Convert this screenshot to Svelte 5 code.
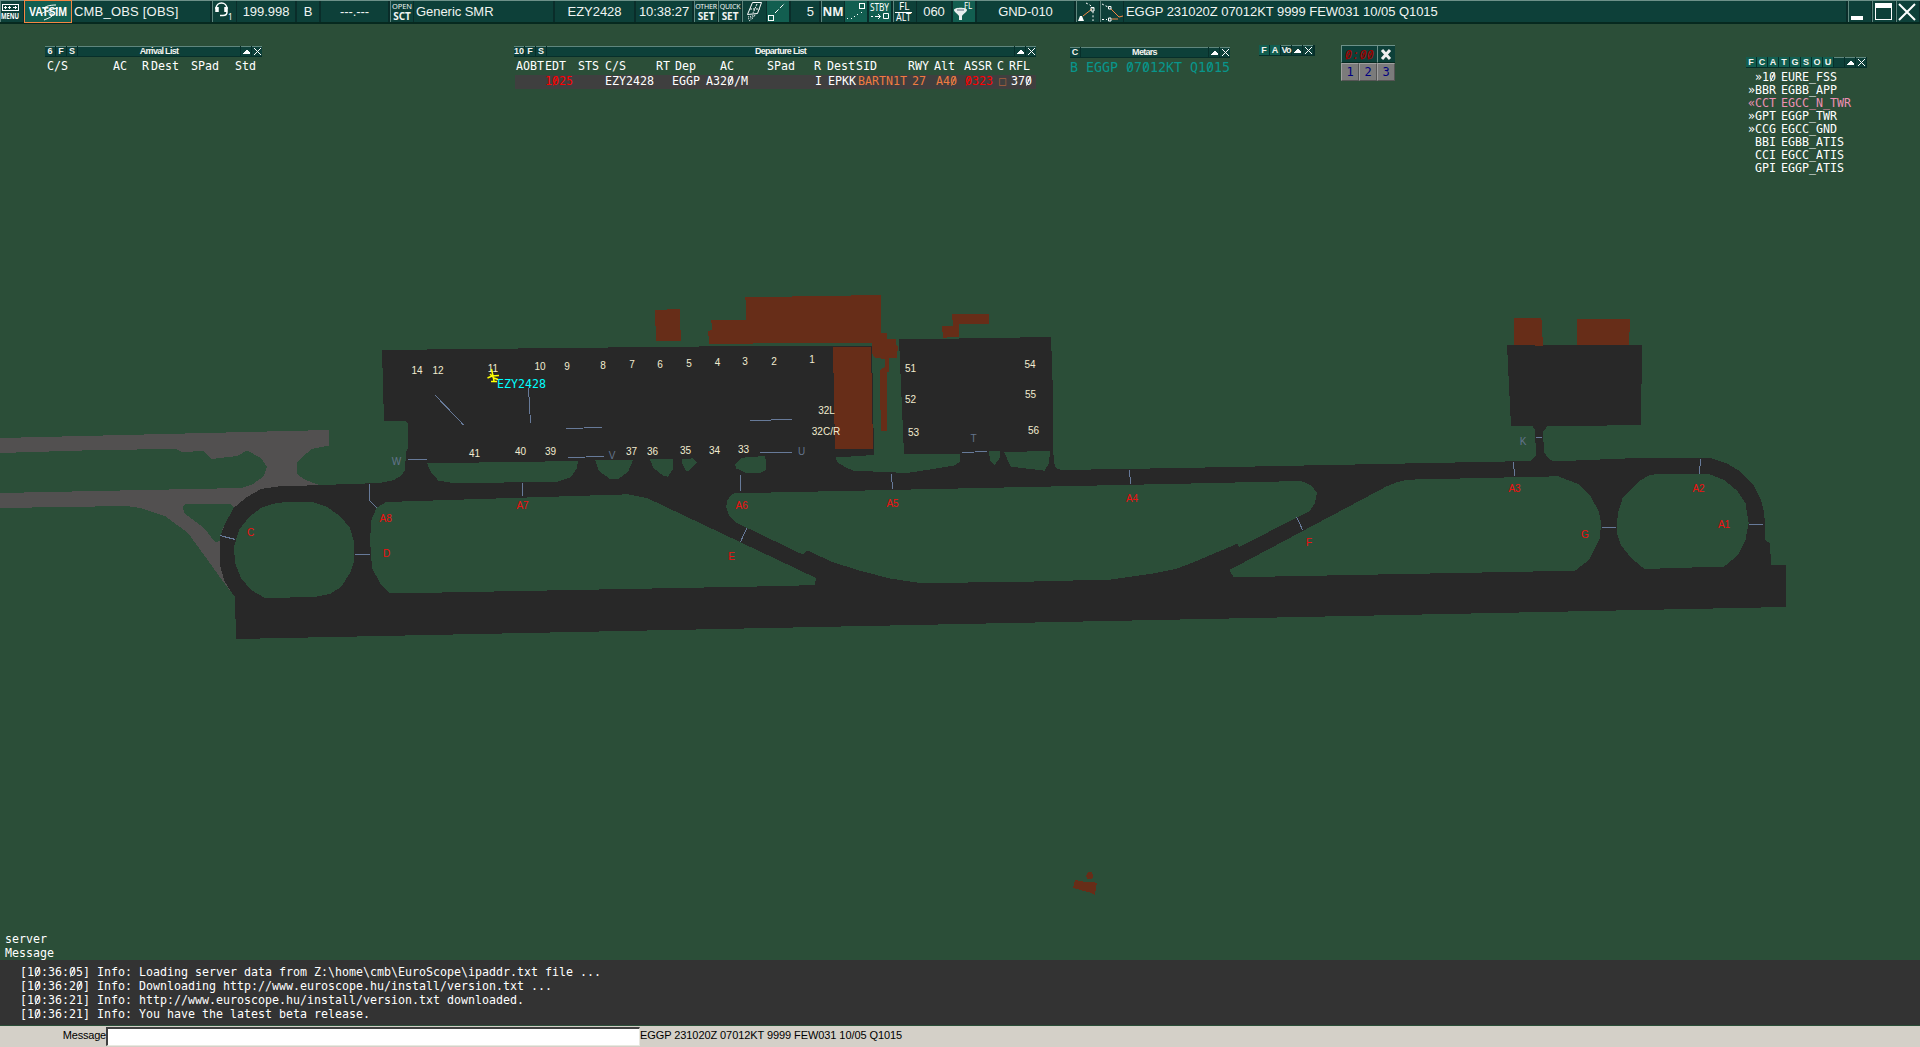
<script>
  const fills = {
    grey: [
      'M0 438L329 430V445.5L312 449L302 457L297 463V474L304 479L313 483L322 486L300 510L235 597L222 580L204 555L188 533L165 516L140 508L126 506L0 508Z'
    ],
    greyHoles: [
      'M0 453L98 450L176 449L182 452L203 451L212 459L237 456L247 450.5L261 458L267 467L264 476L253 484L241 488L0 493Z',
      'M185 504H230L235 508L222 530L220 541L215 542L204 528L184 513L183 506Z'
    ],
    dark: [
      'M235 597L236 639L1786 607V565H1771.5L1769.5 543L1765 540L1764.4 513L1761 500L1753 484L1739.5 471L1726 463L1710 458H1637L1571 460.7H1552L1548 458L1544 452L1543 432L1547 426.5L1594 425.7L1641 425L1642 345H1507L1511 426H1532.5L1535 430L1536 456L1530 461L1180 468L1061 470L1056 468L1053.6 462L1052.5 380L1051 337L899 339.5L904 454H960V462L954 465.5L933 469L904 473.5L892 472L854 471L845 467L837 462L836 457.5L874 455L872 345.5H790L382 350L384 421H405.5L407.5 423L408 448L406 452L405 470L402 475L394 480L380 483L278 486.5L261 489L247 497L233.5 508L224.5 525L220 537L219.5 563L224 580L228.5 588Z'
    ],
    grass: [
      'M286 502H312L326.5 506.5L341 517L350 528L353.5 540L354.5 560L350 573L341 587L330 594L314 597L265 598L251 590L241 578L235 563L234 547L239 530L249 517L261 508L273.5 503.7Z',
      'M386 502L628 494.3L647 498L740 542L816 578L815 585L783 586L389.5 593.5L380 583L372 568L370 540L371.4 520L376.5 508Z',
      'M734.6 493.3L1200 483.3L1301 481L1310.5 485L1317 492.5L1315 503L1309.5 511L1239.3 547L1237.3 543.7L1194 562L1176 569L1150 574L1111 579.5L1015 582L920 583L890 578.5L861 571L833 562.3L807 550.3L803 554.7L736.4 522.7L729.3 516L726 507L727.5 500L731 495Z',
      'M1407 479.7L1558 476.3L1579.5 484.5L1591 497L1599 512L1601 523L1600 538L1589 560L1575 570.7L1233.5 577.3L1229.5 570L1386 486.7L1397.5 482Z',
      'M1656.5 474H1709L1724 480L1737.5 491L1745.5 503L1748.6 523L1745.5 540L1738 555L1724 566.7L1698 567.3L1644.6 569L1631 558L1621 545L1617 533L1617.7 513L1623 497L1641 480L1648.6 475.7Z',
      'M427 463.3L578 461L577 468L571 477L556 482L453 483L438.5 480.7L431.5 473Z',
      'M595 460H633L628 472L618 479H610L599 471Z',
      'M649.6 459H673L672.5 470L668 476.7L663.6 476L653.6 468Z',
      'M682.5 459.3L693 458.3L697 462.7L689.3 470.7H685.7L682 463.3Z',
      'M742 457.7L765.4 456L766 470L760 473.3L745.7 472.7L736 468.3L735 464.3Z',
      'M989 451.3H1000L999.6 458.3L994.6 464.7L990 460Z',
      'M1004 451.7L1050 451.3L1049 463.3L1044.6 470.7L1010.7 466.7Z'
    ],
    brown: [
      'M833 347H871L873 448.7H835Z',
      'M745.4 297.3L881 295V333.3H887V339.3H896.5L895.7 344L898 346L896.8 358H889V371.7H886.8L887.5 431H881L879.6 370L884.6 367.3V359L875 357.7L872 353.3V343L709.3 343.7L708 331L711.8 330L711.4 320H746.4Z',
      'M654.6 310L679.6 309L681 340.7H656.4Z',
      'M952 314H989V324H959V337L943 337.7L942 326H953Z',
      'M1514 318H1541.4L1543 345.7L1514.5 345Z',
      'M1577 319H1630L1629 344.7H1577Z',
      'M1086 876L1088 872.5L1091.5 872L1093.5 875L1092 879L1088 879.5Z',
      'M1075 879.7L1087 882.5L1089.5 881.5L1097 883L1094.7 894.7L1091.5 893L1073 888Z'
    ]
  };

  const holdLines = [
    'M407.5 459.5H426.5', 'M369.5 484V500.7L376.7 508', 'M219.6 535.5L235.5 539.5',
    'M355 554.5H370', 'M522.5 482.5V496', 'M435 395L463.6 425', 'M528.5 388L530.5 423',
    'M566 428.5L602 427.5', 'M568 457.5L603.6 456.5', 'M750 420.5L792.5 419.5',
    'M760 452.5H792', 'M740.5 475V491', 'M891.5 474L892.5 489', 'M1129.5 470L1130.5 484',
    'M746.8 528L740.4 542', 'M962 452.5L987.5 451.5', 'M1536 437.5H1542',
    'M1513.5 462L1514.5 476', 'M1700.5 459L1699.5 474', 'M1601.5 527.5H1616',
    'M1749 524.5H1763', 'M1296.6 516.7L1302.6 530'
  ];

  const stands = [
    ['14', 417, 374], ['12', 438, 374], ['11', 493, 372], ['10', 540, 370], ['9', 567, 370],
    ['8', 603, 369], ['7', 632, 368], ['6', 660, 368], ['5', 689, 367], ['4', 717.5, 366],
    ['3', 745, 365], ['2', 774, 365], ['1', 812, 363], ['32L', 826.5, 414], ['32C/R', 826, 435],
    ['41', 474.5, 457], ['40', 520.5, 455], ['39', 550.5, 455], ['37', 631.5, 455],
    ['36', 652.5, 455], ['35', 685.5, 454], ['34', 714.5, 454], ['33', 743.5, 453],
    ['51', 910.5, 372], ['52', 910.5, 403], ['53', 913.5, 436], ['54', 1030, 368],
    ['55', 1030.5, 398], ['56', 1033.5, 434]
  ];
  const points = [
    ['C', 250.5, 536], ['A8', 385.7, 522], ['D', 386.5, 557], ['A7', 522.5, 509],
    ['A6', 741.7, 509], ['A5', 892.5, 507], ['A4', 1132, 502], ['E', 731.7, 560],
    ['A3', 1514.5, 492], ['A2', 1698.5, 492], ['A1', 1724, 528], ['F', 1309, 546], ['G', 1585, 538]
  ];
  const taxiways = [['W', 396.5, 465], ['V', 612, 459], ['U', 801.5, 455], ['T', 973.5, 442], ['K', 1523, 445]];

  // each cell: [width, text, colour class]
  const arrivalHead = [[66, 'C/S'], [29, 'AC'], [9, 'R'], [40, 'Dest'], [44, 'SPad'], [29, 'Std']];
  const departureHead = [
    [29, 'AOBT'], [33, 'EDT'], [27, 'STS'], [51, 'C/S'], [19, 'RT'], [45, 'Dep'], [47, 'AC'],
    [47, 'SPad'], [13, 'R'], [29, 'Dest'], [52, 'SID'], [26, 'RWY'], [30, 'Alt'], [33, 'ASSR'],
    [12, 'C'], [24, 'RFL']
  ];
  const departureRow = [
    [29, ''], [60, '1025', 'red'], [67, 'EZY2428'], [34, 'EGGP'], [109, 'A320/M'], [13, 'I'],
    [30, 'EPKK'], [54, 'BARTN1T', 'orange'], [24, '27', 'orange'], [29, 'A40', 'orange'],
    [34, '0323', 'red'], [12, '□', 'rust'], [24, '370']
  ];
  const controllers = [
    ['»10', 'EURE_FSS'], ['»BBR', 'EGBB_APP'], ['«CCT', 'EGCC_N_TWR', 'pink'], ['»GPT', 'EGGP_TWR'],
    ['»CCG', 'EGCC_GND'], ['BBI', 'EGBB_ATIS'], ['CCI', 'EGCC_ATIS'], ['GPI', 'EGGP_ATIS']
  ];
  const log = [
    '[10:36:05] Info: Loading server data from Z:\\home\\cmb\\EuroScope\\ipaddr.txt file ...',
    '[10:36:20] Info: Downloading http://www.euroscope.hu/install/version.txt ...',
    '[10:36:21] Info: http://www.euroscope.hu/install/version.txt downloaded.',
    '[10:36:21] Info: You have the latest beta release.'
  ];
  const metar = 'EGGP 231020Z 07012KT 9999 FEW031 10/05 Q1015';
  const pieces = (s) => s.split(/(0)/).filter((p) => p !== '');
</script>

{#snippet mono(s)}{#each pieces(s) as p}{#if p === '0'}<span class="zero">0</span>{:else}{p}{/if}{/each}{/snippet}

{#snippet cells(list)}
  {#each list as [w, text, tone]}<span class="cell {tone ?? ''}" style:width="{w}px">{@render mono(text)}</span>{/each}
{/snippet}

{#snippet upClose()}
  <span class="wb sq"><svg width="9" height="9" shape-rendering="crispEdges"><path d="M1 7H8V6L5 3H4L1 6Z" fill="#fff" /></svg></span>
  <span class="wb sq"><svg width="9" height="9"><path d="M1 1L8 8M8 1L1 8" stroke="#fff" /></svg></span>
{/snippet}

<div class="screen">
  <header class="bar">
    <div class="c btn w24">
      <svg width="22" height="21" shape-rendering="crispEdges" fill="none" stroke="#fff">
        <path d="M1.5 3.5H17.500V9.5H1.5ZM3 6.500H6M7 6.500H10M12 6.500H16M4.500 5V8M8.5 5V8M14.5 5V8" />
        <text x="0" y="18" class="tiny bold" textLength="18" lengthAdjust="spacingAndGlyphs">MENU</text>
      </svg>
    </div>
    <div class="logo">
      <svg width="46" height="21">
        <text x="4" y="15" textLength="38" lengthAdjust="spacingAndGlyphs" class="vat">VATSIM</text>
        <path d="M31 4C24 4 17 6 20 9C23 12 31 12 27 15C25 17 21 18 19 19M16 13C22 9 28 8 33 7" fill="none" stroke="#fff" />
      </svg>
    </div>
    <div class="c left w140 wide">CMB_OBS [OBS]</div>
    <div class="c btn w25">
      <svg width="23" height="21" fill="none" stroke="#fff">
        <path d="M3 8C3 0 14 0 14 8" stroke-width="1.6" /><path d="M4 6V11M13 6V11" stroke-width="3.5" />
        <path d="M14 11Q14 14.500 10 14.500H7" stroke-width="1.5" />
        <text x="15" y="19" class="tiny">1</text>
      </svg>
    </div>
    <div class="c w60">199.998</div>
    <div class="c w24">B</div>
    <div class="c w69">---.---</div>
    <div class="c btn two w24"><span>OPEN</span><b>SCT</b></div>
    <div class="c left w141">Generic SMR</div>
    <div class="c w81">EZY2428</div>
    <div class="c w58">10:38:27</div>
    <div class="c btn two w24"><span class="sm">OTHER</span><b>SET</b></div>
    <div class="c btn two w24"><span class="sm">QUICK</span><b>SET</b></div>
    <div class="c btn w25">
      <svg width="22" height="21" fill="none" stroke="#fff"><path d="M8.5 1.5H17.5L13.5 12.5L3.5 13.5Z" /><path d="M13 3L9 12M6 8H16" stroke-dasharray="2 1" /><path d="M4 16L12 14M4 18L11 15M5 20L9 17" stroke-dasharray="1 1" /></svg>
    </div>
    <div class="c lit w24">
      <svg width="22" height="21" fill="none" stroke="#fff"><path d="M1.5 14.5H6.5V19.5H1.5Z" shape-rendering="crispEdges" /><path d="M8 12L18 2" stroke-dasharray="5 2" /></svg>
    </div>
    <div class="c right w30">5</div>
    <div class="c btn w24 nm">NM</div>
    <div class="c lit w24">
      <svg width="22" height="21" fill="none" stroke="#fff" shape-rendering="crispEdges"><path d="M14.5 2.5H19.5V7.5H14.5Z" /><path d="M2 17.5H3M6 17.5H7M9 15.5H10M12 13.5H13M16 11.5H17" /></svg>
    </div>
    <div class="c lit w24">
      <svg width="22" height="21" fill="none" stroke="#fff"><text x="1" y="10" class="small" textLength="19" lengthAdjust="spacingAndGlyphs">STBY</text><path d="M2 15.5H4M6 15.5H11M9 13L11.5 15.5L9 18M14.5 12.5H19.5V17.5H14.5Z" /></svg>
    </div>
    <div class="c btn w24">
      <svg width="22" height="21" fill="none" stroke="#fff"><text x="5" y="9" class="small">FL</text><path d="M1 11.5H18" /><text x="2" y="20" class="small" textLength="15" lengthAdjust="spacingAndGlyphs">ALT</text></svg>
    </div>
    <div class="c w36">060</div>
    <div class="c lit w24">
      <svg width="22" height="21"><path d="M1 9C1 6 14 6 14 9C14 11 10 13 9 15V19H6V15C5 13 1 11 1 9Z" fill="#e8eeee" /><path d="M4 9H11" stroke="#567" /><text x="11" y="8" class="tiny">FL</text></svg>
    </div>
    <div class="c w99">GND-010</div>
    <div class="c btn w24">
      <svg width="22" height="21" fill="none"><path d="M1 20H7L5 15H3Z" fill="#fff" /><path d="M6 15L15 8" stroke="#f58642" /><path d="M14 6.500H17V10H14Z" stroke="#fff" /><path d="M9 2L13 4L16 7V20" stroke="#fff" stroke-dasharray="2 2" /></svg>
    </div>
    <div class="c btn w24">
      <svg width="22" height="21" fill="none"><path d="M10 8L18 16M11 18H17M18 16L22 15" stroke="#f58642" /><path d="M7.500 5.500H10V8H7.500ZM7.500 17H10V20H7.500Z" stroke="#fff" /><path d="M1 3L7 6M1 18.500H6" stroke="#fff" stroke-dasharray="2 2" /></svg>
    </div>
    <div class="c left grow">{metar}</div>
    <div class="c btn w24"><svg width="22" height="21"><path d="M2 15H14V19H2Z" fill="#fff" /></svg></div>
    <div class="c btn w24"><svg width="22" height="21" shape-rendering="crispEdges"><path d="M2 2H19V19H2ZM3 7V18H18V7Z" fill="#fff" fill-rule="evenodd" /></svg></div>
    <div class="c btn w24"><svg width="22" height="21"><path d="M2 3L18 19M18 3L2 19" stroke="#fff" stroke-width="2" /></svg></div>
  </header>

  <main class="scope">
    <svg class="map" viewBox="0 24 1920 936" width="1920" height="936">
      <g shape-rendering="crispEdges">
        {#each fills.grey as d}<path class="f-grey" {d} />{/each}
        {#each fills.greyHoles as d}<path class="f-grass" {d} />{/each}
        {#each fills.dark as d}<path class="f-dark" {d} />{/each}
        {#each fills.grass as d}<path class="f-grass" {d} />{/each}
        {#each fills.brown as d}<path class="f-brown" {d} />{/each}
        {#each holdLines as d}<path class="hold" {d} />{/each}
      </g>
      {#each stands as [t, x, y]}<text class="lbl stand" {x} {y}>{t}</text>{/each}
      {#each points as [t, x, y]}<text class="lbl point" {x} {y}>{t}</text>{/each}
      {#each taxiways as [t, x, y]}<text class="lbl taxi" {x} {y}>{t}</text>{/each}
      <path d="M491.500 369L493 376L494 381M487.500 378L492 376L499 375.500M490 374L494 378L498 379.500M491 381.500H497" fill="none" stroke="#ff0" stroke-width="1.500" />
      <text class="tag" x="497" y="388">EZY2428</text>
    </svg>

    <section class="win arrival">
      <div class="title"><span class="wb">6</span><span class="wb">F</span><span class="wb">S</span><span class="wb name">Arrival List</span>{@render upClose()}</div>
      <div class="head">{@render cells(arrivalHead)}</div>
    </section>

    <section class="win departure">
      <div class="title"><span class="wb">10</span><span class="wb">F</span><span class="wb">S</span><span class="wb name">Departure List</span>{@render upClose()}</div>
      <div class="head">{@render cells(departureHead)}</div>
      <div class="row">{@render cells(departureRow)}</div>
    </section>

    <section class="win metars">
      <div class="title"><span class="wb">C</span><span class="wb name">Metars</span>{@render upClose()}</div>
      <div class="wx">{@render mono('B EGGP 07012KT Q1015')}</div>
    </section>

    <section class="win voice">
      <div class="title"><span class="wb on">F</span><span class="wb on">A</span><span class="wb vo">Vo</span>{@render upClose()}</div>
    </section>

    <section class="win timer">
      <div class="clock">{@render mono('0:00')}</div>
      <div class="stop"><svg width="16" height="16"><path d="M4 4L12 13M12 4L4 13" stroke="#eee" stroke-width="3" /></svg></div>
      {#each [1, 2, 3] as n}<div class="num">{n}</div>{/each}
    </section>

    <section class="win online">
      <div class="title">
        {#each 'FCATGSOU' as l}<span class="wb on">{l}</span>{/each}<span class="wb"></span>{@render upClose()}
      </div>
      <div class="people">
        {#each controllers as [id, name, tone]}
          <div class="person {tone ?? ''}"><span class="id">{@render mono(id)}</span><span>{name}</span></div>
        {/each}
      </div>
    </section>

    <div class="tabs"><div>server</div><div>Message</div></div>
  </main>

  <section class="log">
    {#each log as line}<div>{@render mono(line)}</div>{/each}
  </section>

  <footer>
    <span class="who">Message</span>
    <span class="entry"></span>
    <span class="echo">{metar}</span>
  </footer>
</div>

<style>
  :global(body) { margin: 0; overflow: hidden; background: #2b4e38; }
  .screen {
    width: 1920px; height: 1047px; display: flex; flex-direction: column; overflow: hidden;
    background: #2b4e38; color: #fff; font: 11.63px/14px "DejaVu Sans Mono", monospace;
  }
  .bar {
    height: 24px; box-sizing: border-box; display: flex; background: #0d4039;
    border-top: 1px solid #6d9189; border-bottom: 2px solid #06291f;
    font: 13px/22px "Liberation Sans", Arial, sans-serif; letter-spacing: -0.05px; flex: none;
  }
  .c {
    box-sizing: border-box; display: flex; align-items: center; justify-content: center; flex: none;
    border-right: 2px solid #0a2d2a; white-space: nowrap; color: #f0f4f2; height: 21px;
  }
  .btn { border-left: 1px solid #5f867d; border-right-width: 1px; }
  .lit { background: #125e50; }
  .left { justify-content: flex-start; padding-left: 2px; }
  .wide { letter-spacing: 0.2px; }
  .right { justify-content: flex-end; padding-right: 5px; }
  .grow { flex: 1; }
  .w24 { width: 24px; } .w25 { width: 25px; } .w30 { width: 30px; } .w36 { width: 36px; }
  .w58 { width: 58px; } .w60 { width: 60px; } .w69 { width: 69px; } .w81 { width: 81px; }
  .w99 { width: 99px; } .w140 { width: 140px; } .w141 { width: 141px; }
  .bar svg { flex: none; overflow: visible; display: block; }
  .logo { box-sizing: border-box; width: 48px; height: 23px; margin-top: -1px; border: 1px solid #f58642; background: #125e50; flex: none; }
  .vat { font: bold 12px "Liberation Sans", sans-serif; fill: #fff; }
  .tiny { font: 8px "Noto Sans", sans-serif; fill: #fff; stroke: none; }
  .bold { font-weight: bold; }
  .small { font: 10px "Noto Sans", sans-serif; fill: #fff; stroke: none; }
  .two { flex-direction: column; font: 7.5px/9px "Noto Sans", sans-serif; }
  .two .sm { font-size: 7px; letter-spacing: -0.2px; }
  .two b { font-size: 10px; line-height: 11px; }
  .nm { font: bold 12px "Noto Sans", sans-serif; }

  .scope { position: relative; flex: 1; }
  .map { display: block; }
  .f-grey { fill: #525050; } .f-grass { fill: #2b4e38; } .f-dark { fill: #282828; } .f-brown { fill: #672d18; }
  .hold { fill: none; stroke: #677a99; stroke-width: 1; }
  .lbl { font: 10px "Liberation Sans", Arial, sans-serif; text-anchor: middle; }
  .stand { fill: #f2ecd0; } .point { fill: #f01010; } .taxi { fill: #63748c; }
  .tag { font: 11.63px "DejaVu Sans Mono", monospace; fill: #0ff; }

  .win { position: absolute; }
  .arrival { left: 45px; top: 22px; width: 217px; }
  .departure { left: 514px; top: 22px; width: 522px; }
  .metars { left: 1070px; top: 23px; width: 160px; }
  .voice { left: 1259px; top: 21px; width: 56px; }
  .online { left: 1746px; top: 33px; width: 121px; }
  .title { display: flex; height: 11px; background: #072f2a; gap: 1px; font: bold 9px/9px "Liberation Sans", sans-serif; }
  .wb { flex: none; width: 10px; height: 9px; border-top: 1px solid #5f867d; background: #0d4039; text-align: center; color: #f4f4f0; }
  .wb svg { display: block; margin: auto; }
  .name { flex: 1; letter-spacing: -0.7px; }
  .vo { letter-spacing: -0.8px; }
  .on { background: #125e50; border-top-color: #125e50; }
  .head, .row { display: flex; white-space: pre; }
  .head { padding-left: 2px; line-height: 18px; }
  .row { margin-left: 1px; padding-left: 1px; height: 14px; line-height: 13px; background: #3f3f3f; }
  .cell { flex: none; }
  .red { color: #f00; } .orange { color: #f07c40; } .rust { color: #a8603c; }
  .wx { font-size: 13.29px; line-height: 20px; color: #08968c; white-space: pre; }
  .zero { position: relative; }
  .zero::after {
    content: ""; position: absolute; left: calc(50% - 0.5px); top: 2px; width: 1px; height: 10px;
    background: currentColor; transform: rotate(25deg);
  }
  .timer { left: 1341px; top: 21px; width: 54px; display: grid; grid-template-columns: 18px 18px 18px; grid-template-rows: 18px 18px; }
  .clock, .stop { background: #0d4039; border-top: 1px solid #6d9189; border-left: 1px solid #6d9189; border-bottom: 1px solid #06291f; box-sizing: border-box; }
  .clock { grid-column: span 2; color: #a00000; font-size: 12px; line-height: 18px; text-align: center; font-style: italic; }
  .stop svg { display: block; }
  .num { box-sizing: border-box; background: #7b7b7b; border: 1px solid #a0a0a0; border-right-color: #555; border-bottom-color: #555; color: #000080; font-size: 12px; line-height: 17px; text-align: center; }
  .people { padding: 3px 0 0 2px; line-height: 13px; }
  .person { display: flex; gap: 5px; height: 13px; }
  .id { width: 28px; text-align: right; }
  .pink { color: #ee90b4; }
  .tabs { position: absolute; left: 5px; bottom: 0; }

  .log { flex: none; height: 66px; box-sizing: border-box; padding: 5px 0 0 20px; background: #333; border-bottom: 1px solid #2b4e38; white-space: pre; }
  footer { flex: none; height: 21px; display: flex; align-items: flex-start; background: #d4d0c8; color: #000; font: 11px/18px "Liberation Sans", Arial, sans-serif; }
  .who { width: 106px; text-align: right; letter-spacing: -0.2px; }
  .entry { width: 534px; height: 19px; margin-top: 1px; box-sizing: border-box; background: #fff; border: 2px solid #404040; border-right: 1px solid #e8e8e0; border-bottom: 1px solid #e8e8e0; }
  .echo { letter-spacing: -0.08px; }
</style>
